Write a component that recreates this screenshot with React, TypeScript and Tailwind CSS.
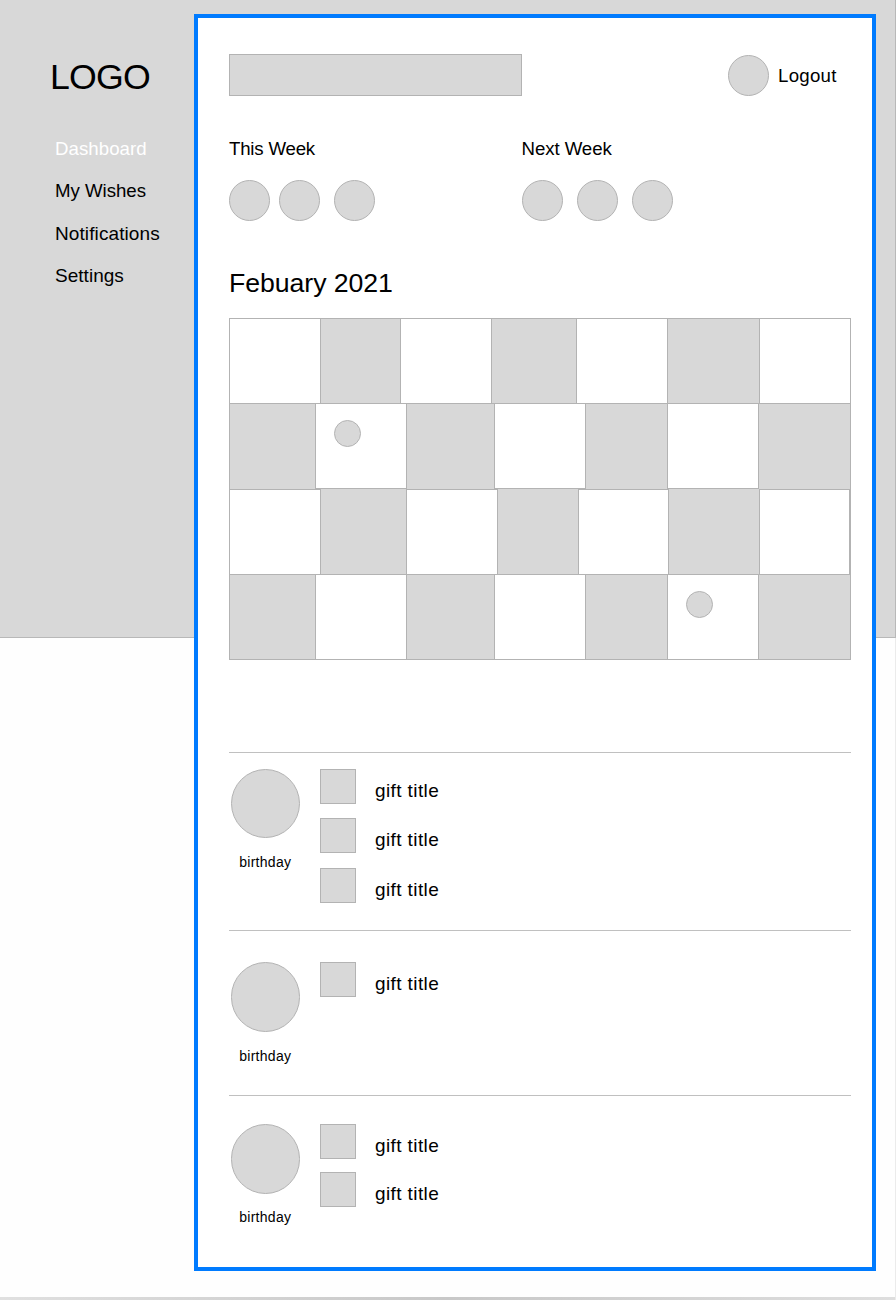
const navItems = [
  { label: 'Dashboard', cls: 'text-white h-[42px] text-[18.67px] tracking-[0.05px]' },
  { label: 'My Wishes', cls: 'text-black h-[43px] text-[18.67px] tracking-[-0.03px]' },
  { label: 'Notifications', cls: 'text-black h-[42px] text-[19px] tracking-[0.1px]' },
  { label: 'Settings', cls: 'text-black h-[42px] text-[19px] tracking-[0.03px]' },
];

const G = 'bg-[#d8d8d8] ';
const W = 'bg-white ';

const calendarRows = [
  {
    row: 'h-[85px] border-b',
    cells: [W + 'w-[91px]', G + 'w-[80px]', W + 'w-[91px]', G + 'w-[85px]', W + 'w-[91px]', G + 'w-[92px]', W + 'w-[91px]'],
  },
  {
    row: 'h-[85px]',
    cells: [
      G + 'w-[86px]',
      W + 'w-[91px] border-b',
      G + 'w-[88px]',
      W + 'w-[91px] border-b',
      G + 'w-[82px]',
      W + 'w-[91px] border-b',
      G + 'w-[92px]',
    ],
  },
  {
    row: 'h-[86px] border-b',
    cells: [
      W + 'w-[91px] border-t',
      G + 'w-[86px]',
      W + 'w-[91px] border-t',
      G + 'w-[81px]',
      W + 'w-[90px] border-t',
      G + 'w-[91px]',
      W + 'w-[91px] border-t border-r',
    ],
  },
  {
    row: 'h-[84px]',
    cells: [G + 'w-[86px]', W + 'w-[91px]', G + 'w-[88px]', W + 'w-[91px]', G + 'w-[82px]', W + 'w-[91px]', G + 'w-[92px]'],
  },
];

const markers: Record<string, string> = {
  '1-1': 'left-[18px] top-[16px]',
  '3-5': 'left-[18px] top-[16px]',
};

const people = [
  {
    section: 'h-[178px] pt-[15.5px]',
    label: 'mt-[15px]',
    gifts: ['mb-[14.5px]', 'mb-[14.5px]', ''],
  },
  { section: 'h-[165px] pt-[31px]', label: 'mt-[15px]', gifts: [''] },
  { section: 'h-[150px] pt-[28px]', label: 'mt-[14px]', gifts: ['mb-[13px]', ''] },
];

function Circle({ className }: { className: string }) {
  return <div className={`shrink-0 rounded-full border border-[#b3b3b3] bg-[#d8d8d8] ${className}`} />;
}

function Week({
  title,
  heading,
  first,
  second,
  className,
}: {
  title: string;
  heading: string;
  first: string;
  second: string;
  className: string;
}) {
  return (
    <section className={className}>
      <h2 className={`text-[18.67px] leading-6 ${heading}`}>{title}</h2>
      <div className="mt-[19px] flex">
        <Circle className={`size-[41px] ${first}`} />
        <Circle className={`size-[41px] ${second}`} />
        <Circle className="size-[41px]" />
      </div>
    </section>
  );
}

function Calendar() {
  return (
    <div className="mt-[20px] w-[622px] border-y border-r border-[#b3b3b3]">
      {calendarRows.map((r, i) => (
        <div key={i} className={`flex border-[#b3b3b3] ${r.row}`}>
          {r.cells.map((c, j) => (
            <div key={j} className={`relative shrink-0 border-l border-[#b3b3b3] ${c}`}>
              {markers[`${i}-${j}`] && <Circle className={`absolute size-[27px] ${markers[`${i}-${j}`]}`} />}
            </div>
          ))}
        </div>
      ))}
    </div>
  );
}

export default function App() {
  return (
    <div className="grid h-[1300px] w-[896px] overflow-hidden bg-[#fefefe] font-['Liberation_Sans',Arial,sans-serif] text-black">
      <div className="flex h-[1300px] flex-col border-r border-[#ebebeb] [grid-area:1/1]">
        <div className="-mr-px h-[638px] shrink-0 border-r border-b border-[#b8b8b8] bg-[#d8d8d8]" />
        <div className="mt-auto h-[3px] bg-linear-to-r from-[#e0e0e0] via-[#c8c8c8] to-[#dedede]" />
      </div>

      <div className="flex items-start [grid-area:1/1]">
        <aside className="w-[194px] shrink-0 pt-[56px]">
          <div className="ml-[50px] text-[35.7px] leading-[42px] tracking-[-0.8px]">LOGO</div>
          <nav className="mt-[39px] ml-[55px] leading-6">
            {navItems.map((n) => (
              <a key={n.label} className={`block ${n.cls}`}>
                {n.label}
              </a>
            ))}
          </nav>
        </aside>

        <main className="mt-[14px] h-[1257px] w-[682px] shrink-0 border-4 border-[#007bff] bg-white pt-[36px] pl-[31px]">
          <header className="flex h-[42px] items-center">
            <div className="h-[42px] w-[293px] border border-[#b3b3b3] bg-[#d8d8d8]" />
            <Circle className="mt-px ml-[206px] size-[41px]" />
            <span className="mt-[2px] ml-[9px] text-[18.67px] leading-6 tracking-[0.25px]">Logout</span>
          </header>

          <div className="mt-[41px] flex">
            <Week
              className="w-[292px]"
              title="This Week"
              heading="tracking-[-0.2px]"
              first="ml-[0.4px] mr-[9px]"
              second="mr-[14px]"
            />
            <Week
              className=""
              title="Next Week"
              heading="ml-[0.5px] tracking-[-0.08px]"
              first="ml-[0.6px] mr-[14px]"
              second="mr-[14px]"
            />
          </div>

          <h1 className="mt-[47px] text-[26.67px] leading-[30px] tracking-[-0.05px]">Febuary 2021</h1>
          <Calendar />

          <div className="mt-[92px] w-[622px]">
            {people.map((p, i) => (
              <section key={i} className={`flex border-t border-[#c0c0c0] ${p.section}`}>
                <div className="ml-[1.5px] flex w-[69.5px] flex-col items-center">
                  <Circle className="size-[69.5px]" />
                  <span className={`text-[14px] leading-[18px] tracking-[0.3px] ${p.label}`}>birthday</span>
                </div>
                <ul className="ml-[20px]">
                  {p.gifts.map((g, j) => (
                    <li key={j} className={`flex h-[35px] ${g}`}>
                      <div className="h-[35px] w-[36px] border border-[#b3b3b3] bg-[#d8d8d8]" />
                      <span className="mt-[10px] ml-[19px] text-[19px] leading-6 tracking-[0.4px]">gift title</span>
                    </li>
                  ))}
                </ul>
              </section>
            ))}
          </div>
        </main>
      </div>
    </div>
  );
}
